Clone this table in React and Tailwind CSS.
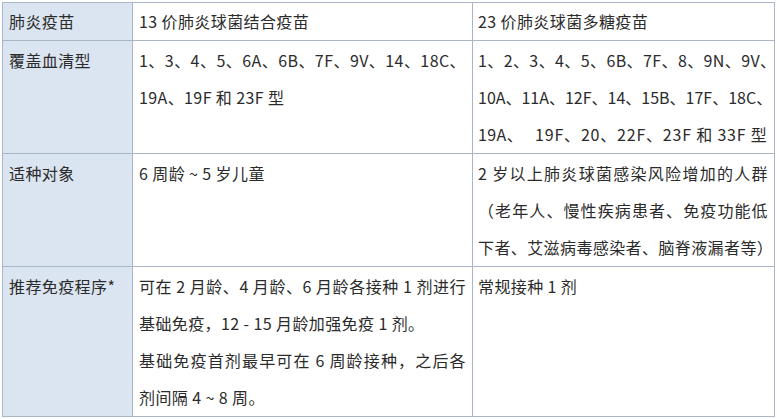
import React from "react";

const FONT = { fontFamily: '"Noto Sans CJK SC", "Noto Sans", sans-serif' };

// each cell is a list of lines; full lines are justified edge to edge,
// split lines keep a wide gap after the first part
const ROWS = [
  {
    label: "肺炎疫苗",
    a: [{ t: "13 价肺炎球菌结合疫苗" }],
    b: [{ t: "23 价肺炎球菌多糖疫苗" }],
  },
  {
    label: "覆盖血清型",
    a: [{ t: "1、3、4、5、6A、6B、7F、9V、14、18C、", full: true }, { t: "19A、19F 和 23F 型" }],
    b: [
      { t: "1、2、3、4、5、6B、7F、8、9N、9V、", full: true },
      { t: "10A、11A、12F、14、15B、17F、18C、", full: true, tight: true },
      { split: ["19A、", "19F、20、22F、23F 和 33F 型"] },
    ],
  },
  {
    label: "适种对象",
    a: [{ t: "6 周龄 ~ 5 岁儿童" }],
    b: [
      { t: "2 岁以上肺炎球菌感染风险增加的人群", full: true },
      { t: "（老年人、慢性疾病患者、免疫功能低", full: true },
      { t: "下者、艾滋病毒感染者、脑脊液漏者等）", full: true },
    ],
  },
  {
    label: "推荐免疫程序*",
    a: [
      { t: "可在 2 月龄、4 月龄、6 月龄各接种 1 剂进行", full: true },
      { t: "基础免疫，12 - 15 月龄加强免疫 1 剂。" },
      { t: "基础免疫首剂最早可在 6 周龄接种，之后各", full: true },
      { t: "剂间隔 4 ~ 8 周。" },
    ],
    b: [{ t: "常规接种 1 剂" }],
  },
];

function Lines({ lines }) {
  return lines.map((line, i) => {
    if (line.split) {
      return (
        <div key={i} className="flex">
          <span>{line.split[0]}</span>
          <span className="ml-[12px] tracking-[0.8px]">{line.split[1]}</span>
        </div>
      );
    }
    const align = line.full ? "text-justify [text-align-last:justify]" : "text-left";
    return (
      <div key={i} className={`${align} ${line.tight ? "tracking-normal" : ""}`}>
        {line.t}
      </div>
    );
  });
}

const cell = "align-top border border-[#a9b6c6] whitespace-nowrap";

export default function App() {
  return (
    <div className="w-[777px] h-[419px] bg-white pt-[2px] pl-[2px]" style={FONT}>
      <table className="w-[772px] border-collapse table-fixed text-[16px] tracking-[0.4px] leading-[37px] text-[#2b2b2b]">
        <colgroup>
          <col className="w-[130px]" />
          <col className="w-[340px]" />
          <col className="w-[302px]" />
        </colgroup>
        <tbody>
          {ROWS.map((row, r) => {
            const pad = r === 0 ? "pt-0" : "pt-[1px]";
            return (
              <tr key={row.label}>
                <td className={`${cell} ${pad} bg-[#dbe5f1] px-[6px]`}>{row.label}</td>
                <td className={`${cell} ${pad} px-[6px]`}>
                  <Lines lines={row.a} />
                </td>
                <td className={`${cell} ${pad} pl-[5px] pr-[6px]`}>
                  <Lines lines={row.b} />
                </td>
              </tr>
            );
          })}
        </tbody>
      </table>
    </div>
  );
}
